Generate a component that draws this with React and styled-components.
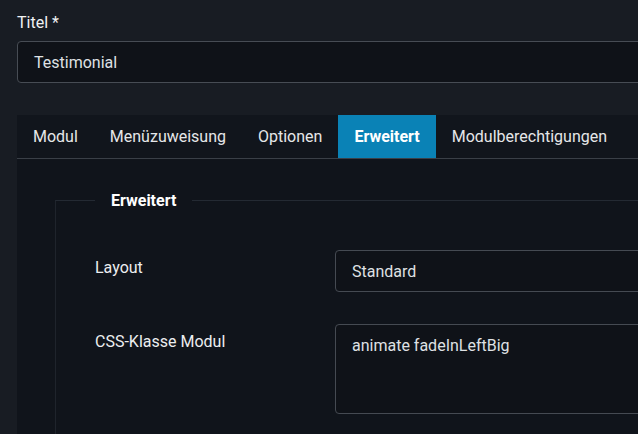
import React from 'react';
import styled, { createGlobalStyle } from 'styled-components';

const GlobalStyle = createGlobalStyle`
  html, body {
    margin: 0;
    padding: 0;
    overflow: hidden;
    background: #181c23;
  }
  body {
    font-family: Roboto, "Liberation Sans", sans-serif;
    color: #e8e9eb;
  }
`;

const Page = styled.div`
  width: 1000px;
  padding: 13px 0 0 17px;
`;

const FieldLabel = styled.label`
  display: block;
  font-size: 16px;
  line-height: 19px;
  margin-bottom: 9px;
  color: #f1f2f3;
`;

const TextInput = styled.div`
  box-sizing: border-box;
  height: 42px;
  padding: 0 16px;
  display: flex;
  align-items: center;
  font-size: 16px;
  color: #dfe1e4;
  background: #0f1218;
  border: 1px solid #474c54;
  border-radius: 4px;
`;

const Panel = styled.div`
  margin-top: 32px;
  background: #10141b;
  height: 400px;
`;

const TabBar = styled.div`
  display: flex;
  background: #11151c;
  border-bottom: 1px solid #3a3f47;
`;

const Tab = styled.div`
  height: 43px;
  padding: 0 16px;
  display: flex;
  align-items: center;
  font-size: 16px;
  font-weight: ${p => (p.active ? 700 : 400)};
  color: ${p => (p.active ? '#ffffff' : '#e6e7e9')};
  background: ${p => (p.active ? '#0a82b6' : 'transparent')};
`;

const Body = styled.div`
  padding: 32px 0 0 38px;
`;

const Fieldset = styled.fieldset`
  margin: 0;
  padding: 40px 0 20px 39px;
  border: 0;
  border-top: 1px solid #242a33;
  border-left: 1px solid #1f242c;
  min-inline-size: 0;
`;

const Legend = styled.legend`
  padding: 0 16px;
  font-size: 16px;
  font-weight: 700;
  color: #ffffff;
`;

const Row = styled.div`
  display: flex;
  margin-bottom: 32px;
`;

const RowLabel = styled.div`
  width: 240px;
  flex-shrink: 0;
  padding-top: 8px;
  font-size: 16px;
  line-height: 19px;
  color: #eceef0;
`;

const Control = styled.div`
  box-sizing: border-box;
  width: 600px;
  height: ${p => p.h}px;
  padding: ${p => (p.multi ? '11px 16px' : '0 16px')};
  display: flex;
  align-items: ${p => (p.multi ? 'flex-start' : 'center')};
  font-size: 16px;
  color: #dfe1e4;
  background: #0f1218;
  border: 1px solid #454a52;
  border-radius: 4px;
`;

const tabs = ['Modul', 'Menüzuweisung', 'Optionen', 'Erweitert', 'Modulberechtigungen'];

const App = () => (
  <>
    <GlobalStyle />
    <Page>
      <FieldLabel>Titel *</FieldLabel>
      <TextInput>Testimonial</TextInput>
      <Panel>
        <TabBar>
          {tabs.map(t => (
            <Tab key={t} active={t === 'Erweitert'}>
              {t}
            </Tab>
          ))}
        </TabBar>
        <Body>
          <Fieldset>
            <Legend>Erweitert</Legend>
            <Row>
              <RowLabel>Layout</RowLabel>
              <Control h={42}>Standard</Control>
            </Row>
            <Row>
              <RowLabel>CSS-Klasse Modul</RowLabel>
              <Control h={90} multi>
                animate fadeInLeftBig
              </Control>
            </Row>
          </Fieldset>
        </Body>
      </Panel>
    </Page>
  </>
);

export default App;
